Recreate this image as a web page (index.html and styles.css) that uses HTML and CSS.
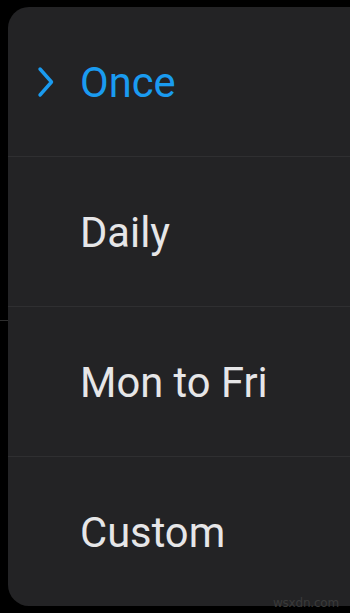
FILE: index.html
```html
<!DOCTYPE html>
<html>
<head>
<meta charset="utf-8">
<link rel="stylesheet" href="styles.css">
</head>
<body>
<div class="screen">
  <div class="backline"></div>
  <div class="menu">
    <div class="item selected">
      <svg class="check" width="20" height="32" viewBox="0 0 20 32"><path d="M3 3 L14.5 16 L3 29" fill="none" stroke="#1a9bf0" stroke-width="3.4" stroke-linecap="round" stroke-linejoin="round"/></svg>
      <span class="label">Once</span>
    </div>
    <div class="item"><span class="label">Daily</span></div>
    <div class="item"><span class="label">Mon to Fri</span></div>
    <div class="item last"><span class="label">Custom</span></div>
  </div>
  <div class="watermark">wsxdn.com</div>
</div>
</body>
</html>
```
FILE: styles.css
```css
html, body {
  margin: 0;
  padding: 0;
  background: #000;
}
.screen {
  position: relative;
  width: 350px;
  height: 613px;
  overflow: hidden;
  background: #000;
  padding-top: 7px;
  padding-left: 8px;
  box-sizing: border-box;
}
.backline {
  position: absolute;
  left: 0;
  top: 320px;
  width: 10px;
  height: 1px;
  background: #2e2e2e;
}
.menu {
  position: relative;
  width: 360px;
  height: 599px;
  background: #232325;
  border-radius: 21px 0 0 21px;
  display: flex;
  flex-direction: column;
}
.item {
  height: 150px;
  flex: none;
  display: flex;
  align-items: center;
  padding-left: 72px;
  border-bottom: 1px solid #2f2f31;
  box-sizing: border-box;
  position: relative;
}
.item.last {
  border-bottom: none;
  height: 149px;
}
.label {
  font-family: Roboto, "Noto Sans", sans-serif;
  font-size: 41.7px;
  color: #e6e6e8;
  line-height: 49px;
  margin-top: 2px;
}
.selected .label {
  color: #1a9bf0;
}
.check {
  position: absolute;
  left: 29px;
  top: 59px;
}
.watermark {
  position: absolute;
  right: 11px;
  bottom: 3px;
  font-family: "DejaVu Sans", sans-serif;
  font-size: 12px;
  color: #3a3a3a;
  letter-spacing: -0.2px;
}
```
